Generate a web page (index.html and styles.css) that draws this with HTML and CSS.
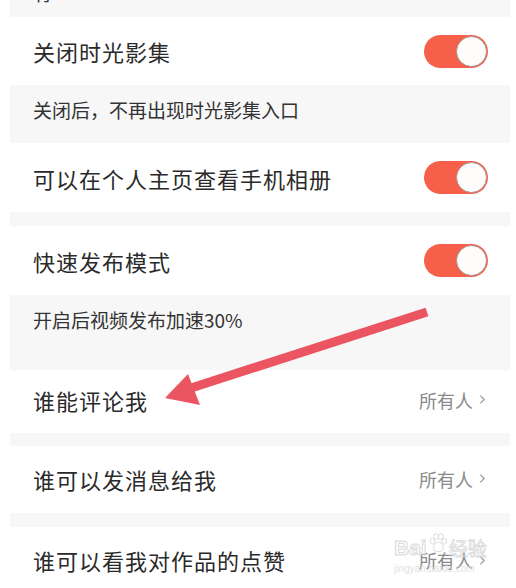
FILE: index.html
```html
<!DOCTYPE html>
<html lang="zh-CN">

<head>
    <meta charset="UTF-8">
    <meta name="viewport" content="width=device-width, initial-scale=1.0">
    <title>隐私设置</title>
    <link rel="stylesheet" href="styles.css">
</head>

<body>
    <div class="page">
        <div class="note note-cut">
            <p>有</p>
        </div>

        <div class="row row-68">
            <span class="label">关闭时光影集</span>
            <span class="switch"><span class="knob"></span></span>
        </div>
        <div class="note note-58">
            <p>关闭后，不再出现时光影集入口</p>
        </div>

        <div class="row row-69">
            <span class="label">可以在个人主页查看手机相册</span>
            <span class="switch"><span class="knob"></span></span>
        </div>
        <div class="gap gap-14"></div>

        <div class="row row-69">
            <span class="label">快速发布模式</span>
            <span class="switch"><span class="knob"></span></span>
        </div>
        <div class="note note-75">
            <p>开启后视频发布加速30%</p>
        </div>

        <div class="row row-63">
            <span class="label">谁能评论我</span>
            <span class="value">所有人
                <svg class="chev" viewBox="0 0 8 12"><path d="M1.5 1.5 L6 6 L1.5 10.5" /></svg>
            </span>
        </div>
        <div class="gap gap-13"></div>

        <div class="row row-67">
            <span class="label">谁可以发消息给我</span>
            <span class="value">所有人
                <svg class="chev" viewBox="0 0 8 12"><path d="M1.5 1.5 L6 6 L1.5 10.5" /></svg>
            </span>
        </div>
        <div class="gap gap-14"></div>

        <div class="row row-66">
            <span class="label">谁可以看我对作品的点赞</span>
            <span class="value">所有人
                <svg class="chev" viewBox="0 0 8 12"><path d="M1.5 1.5 L6 6 L1.5 10.5" /></svg>
            </span>
        </div>

        <!-- annotation arrow drawn over the screenshot -->
        <svg class="arrow" viewBox="0 0 516 588">
            <line x1="427" y1="312" x2="188" y2="389" />
            <polygon points="165,398 188,374 200,405" />
        </svg>

        <div class="watermark">
            <div class="wm-top">
                <span class="wm-bai">Bai</span>
                <svg class="wm-paw" viewBox="0 0 24 24">
                    <ellipse cx="6" cy="10" rx="2.6" ry="3.2" />
                    <ellipse cx="10" cy="5" rx="2.6" ry="3.2" />
                    <ellipse cx="15" cy="5" rx="2.6" ry="3.2" />
                    <ellipse cx="19" cy="10" rx="2.6" ry="3.2" />
                    <path d="M12.5 11 C8 11 6 17 8 20 C10 22 15 22 17 20 C19 17 17 11 12.5 11 Z" />
                </svg>
                <span class="wm-jy">经验</span>
            </div>
            <div class="wm-url">jingyan.baidu.com</div>
        </div>
    </div>
</body>

</html>
```

FILE: styles.css
```css
body {
    margin: 0;
    padding: 0;
    background-color: #ffffff;
    font-family: "Noto Sans CJK SC", "Noto Sans", sans-serif;
}

.page {
    position: relative;
    width: 516px;
    height: 588px;
    overflow: hidden;
}

.row {
    display: flex;
    align-items: center;
    justify-content: space-between;
    padding: 0 28px 0 33px;
    background-color: #ffffff;
}

.row-63 { height: 63px; padding-bottom: 4px; box-sizing: border-box; }
.row-66 { height: 66px; }
.row-67 { height: 67px; padding-bottom: 2px; box-sizing: border-box; }
.row-68 { height: 68px; }
.row-69 { height: 69px; }

.label {
    font-size: 22px;
    color: #2a2a2a;
    letter-spacing: 1px;
}

.note {
    margin: 0 6px 0 10px;
    background-color: #f7f7f7;
    padding-left: 23px;
    overflow: hidden;
}

.note p {
    margin: 0;
    padding-top: 13px;
    font-size: 19px;
    line-height: 24px;
    color: #333333;
}

.note-cut {
    height: 17px;
}

.note-cut p {
    padding-top: 0;
    margin-top: -19px;
}

.note-58 { height: 58px; }
.note-75 { height: 75px; }

.gap {
    margin: 0 6px 0 10px;
    background-color: #f7f7f7;
}

.gap-13 { height: 13px; }
.gap-14 { height: 14px; }

.switch {
    display: flex;
    justify-content: flex-end;
    align-items: center;
    width: 64px;
    height: 33px;
    border-radius: 17px;
    background-color: #f6604b;
    box-sizing: border-box;
    padding-right: 1px;
}

.knob {
    width: 31px;
    height: 31px;
    border-radius: 50%;
    background-color: #fffdfb;
    border: 1.5px solid #a89590;
    box-sizing: border-box;
}

.value {
    display: flex;
    align-items: center;
    gap: 6px;
    font-size: 18px;
    color: #8a8a8a;
    margin-right: 2px;
}

.chev {
    width: 7px;
    height: 11px;
    fill: none;
    stroke: #9a9a9a;
    stroke-width: 1.4;
}

.arrow {
    position: absolute;
    left: 0;
    top: 0;
    width: 516px;
    height: 588px;
    pointer-events: none;
}

.arrow line {
    stroke: #ea5561;
    stroke-width: 9;
}

.arrow polygon {
    fill: #ea5561;
}

.watermark {
    position: absolute;
    left: 394px;
    top: 534px;
    color: #dcdcdc;
    opacity: 0.9;
}

.wm-top {
    display: flex;
    align-items: center;
}

.wm-bai {
    font-family: "Liberation Sans", Arial, sans-serif;
    font-size: 21px;
    font-weight: bold;
    color: transparent;
    -webkit-text-stroke: 1px #d6d6d6;
}

.wm-paw {
    width: 22px;
    height: 22px;
    fill: none;
    stroke: #d6d6d6;
    stroke-width: 1;
    margin-top: -10px;
}

.wm-jy {
    font-size: 19px;
    color: transparent;
    -webkit-text-stroke: 0.8px #d6d6d6;
}

.wm-url {
    font-family: "Liberation Sans", Arial, sans-serif;
    font-size: 10px;
    color: #dedede;
    margin-top: 2px;
}
```
